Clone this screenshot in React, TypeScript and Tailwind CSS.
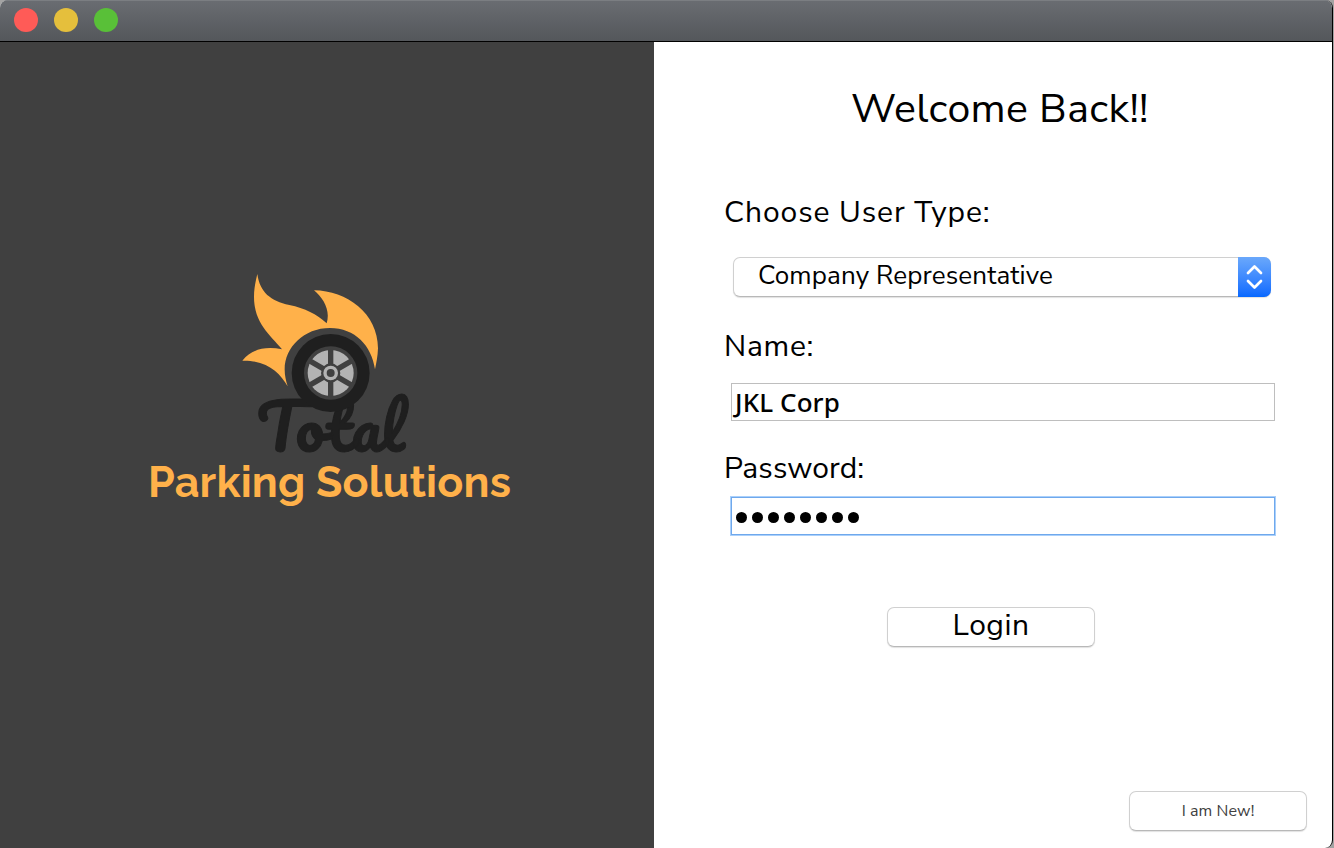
import React from "react";

const spokes = [0, 60, 120];

function Logo() {
  return (
    <svg width="366" height="242" viewBox="147 270 366 242" role="img" aria-label="Total Parking Solutions">
      <text
        x="256.5"
        y="451.5"
        fontSize="62"
        textLength="148"
        lengthAdjust="spacingAndGlyphs"
        fill="#1f1f1f"
        stroke="#1f1f1f"
        strokeWidth="1"
        className="font-['Pacifico','Lato',cursive]"
      >
        Total
      </text>
      <g transform="translate(230 260) scale(0.33333)">
        <path
          fill="#ffb14a"
          d="M82 42C90 98 122 122 178 135C225 145 260 162 290 190C302 150 280 115 252 91C350 92 444 160 444 265C443 290 439 310 435 328C425 257 375 204 300 204C222 204 164 262 164 328C164 348 168 362 173 379C150 338 110 300 37 302C65 268 105 258 156 268C120 225 72 190 72 110C72 85 77 62 82 42Z"
        />
        <circle cx="302" cy="339" r="117" fill="#1f1f1f" />
        <circle cx="302" cy="339" r="80" fill="#404040" />
        <circle cx="302" cy="339" r="69" fill="#b3b3b3" />
        {spokes.map((angle) => (
          <g key={angle} transform={`rotate(${angle} 302 339)`}>
            <rect x="294" y="268" width="16" height="142" fill="#404040" />
          </g>
        ))}
        <circle cx="302" cy="339" r="29" fill="#404040" />
        <circle cx="302" cy="339" r="22" fill="#b3b3b3" />
        <circle cx="302" cy="339" r="12" fill="#404040" />
      </g>
      <text
        x="148"
        y="497"
        fontSize="43"
        fontWeight="700"
        textLength="363"
        fill="#ffb14a"
        className="font-['Raleway','Lato',sans-serif]"
      >
        Parking Solutions
      </text>
    </svg>
  );
}

const outline =
  "rounded-[7px] border border-[#d0d0d0] border-b-[#b8b8b8] bg-white shadow-[0_1px_1px_rgba(0,0,0,0.12)]";

export default function App() {
  return (
    <div className="h-[848px] w-[1334px] overflow-hidden bg-[#a3a3a3] font-['Avenir','Nunito_Sans','Lato',sans-serif] text-black">
      <div className="flex h-full w-[1333px] flex-col overflow-hidden rounded-tr-[8px] rounded-br-[8px] rounded-tl-[8px] border-r border-black bg-white">
        <header className="flex h-[42px] shrink-0 items-start gap-4 border-b border-black bg-linear-to-b from-[#6a6d72] to-[#54575b] pl-[14px] pt-2 shadow-[inset_0_1px_0_#7b7e82]">
          <span className="size-6 rounded-full bg-[#ff5b57]" />
          <span className="size-6 rounded-full bg-[#e5bf3c]" />
          <span className="size-6 rounded-full bg-[#59c038]" />
        </header>
        <div className="flex flex-1">
          <aside className="flex w-[654px] justify-center bg-[#404040] pt-[228px] pl-[6px]">
            <Logo />
          </aside>
          <main className="flex w-[678px] flex-col">
            <h1 className="mt-[43px] ml-[197px] h-12 whitespace-nowrap text-[41px] leading-[48px] tracking-[0.35px]">
              Welcome Back!!
            </h1>
            <label className="mt-[62px] ml-[70px] h-9 whitespace-nowrap text-[30px] leading-[36px] tracking-[0.9px]">
              Choose User Type:
            </label>
            <div className={`mt-[26px] ml-[79px] flex h-10 w-[538px] ${outline}`}>
              <span className="flex-1 whitespace-nowrap pl-6 text-[26px] leading-[36px] tracking-[0.13px]">
                Company Representative
              </span>
              <span className="-my-px -mr-px flex h-10 w-[33px] items-center justify-center rounded-r-[7px] bg-linear-to-b from-[#6aa8fb] to-[#0568ff]">
                <svg width="17" height="26" viewBox="0 0 17 26" fill="none" stroke="white" strokeWidth="2.7" strokeLinecap="round" strokeLinejoin="round">
                  <path d="M2 9L8.5 2.5L15 9M2 17L8.5 23.5L15 17" />
                </svg>
              </span>
            </div>
            <label className="mt-8 ml-[70px] h-9 text-[30px] leading-[36px] tracking-[0.7px]">Name:</label>
            <div className="mt-[18px] ml-[77px] h-[38px] w-[544px] border border-[#bebebe] pl-[3px] font-['Noto_Sans',sans-serif] text-[26px] font-medium leading-[37px] tracking-[0.1px]">
              JKL Corp
            </div>
            <label className="mt-[30px] ml-[70px] h-9 text-[30px] leading-[36px] tracking-[0.1px]">Password:</label>
            <div className="mt-[10px] ml-[77px] flex h-[38px] w-[544px] items-center gap-[5px] border border-[#6fa8ec] pl-1 pt-[3px] shadow-[0_0_0_1px_#aad0fb]">
              {Array.from({ length: 8 }, (_, i) => (
                <span key={i} className="size-[11px] rounded-full bg-black" />
              ))}
            </div>
            <button className={`mt-[72px] ml-[233px] h-10 w-[208px] pb-[2px] text-[30px] leading-[36px] tracking-[0.5px] ${outline}`}>
              Login
            </button>
            <button className={`mt-[144px] ml-[475px] h-10 w-[178px] text-[16px] leading-[36px] tracking-[0.1px] text-[#404040] ${outline}`}>
              I am New!
            </button>
          </main>
        </div>
      </div>
    </div>
  );
}
